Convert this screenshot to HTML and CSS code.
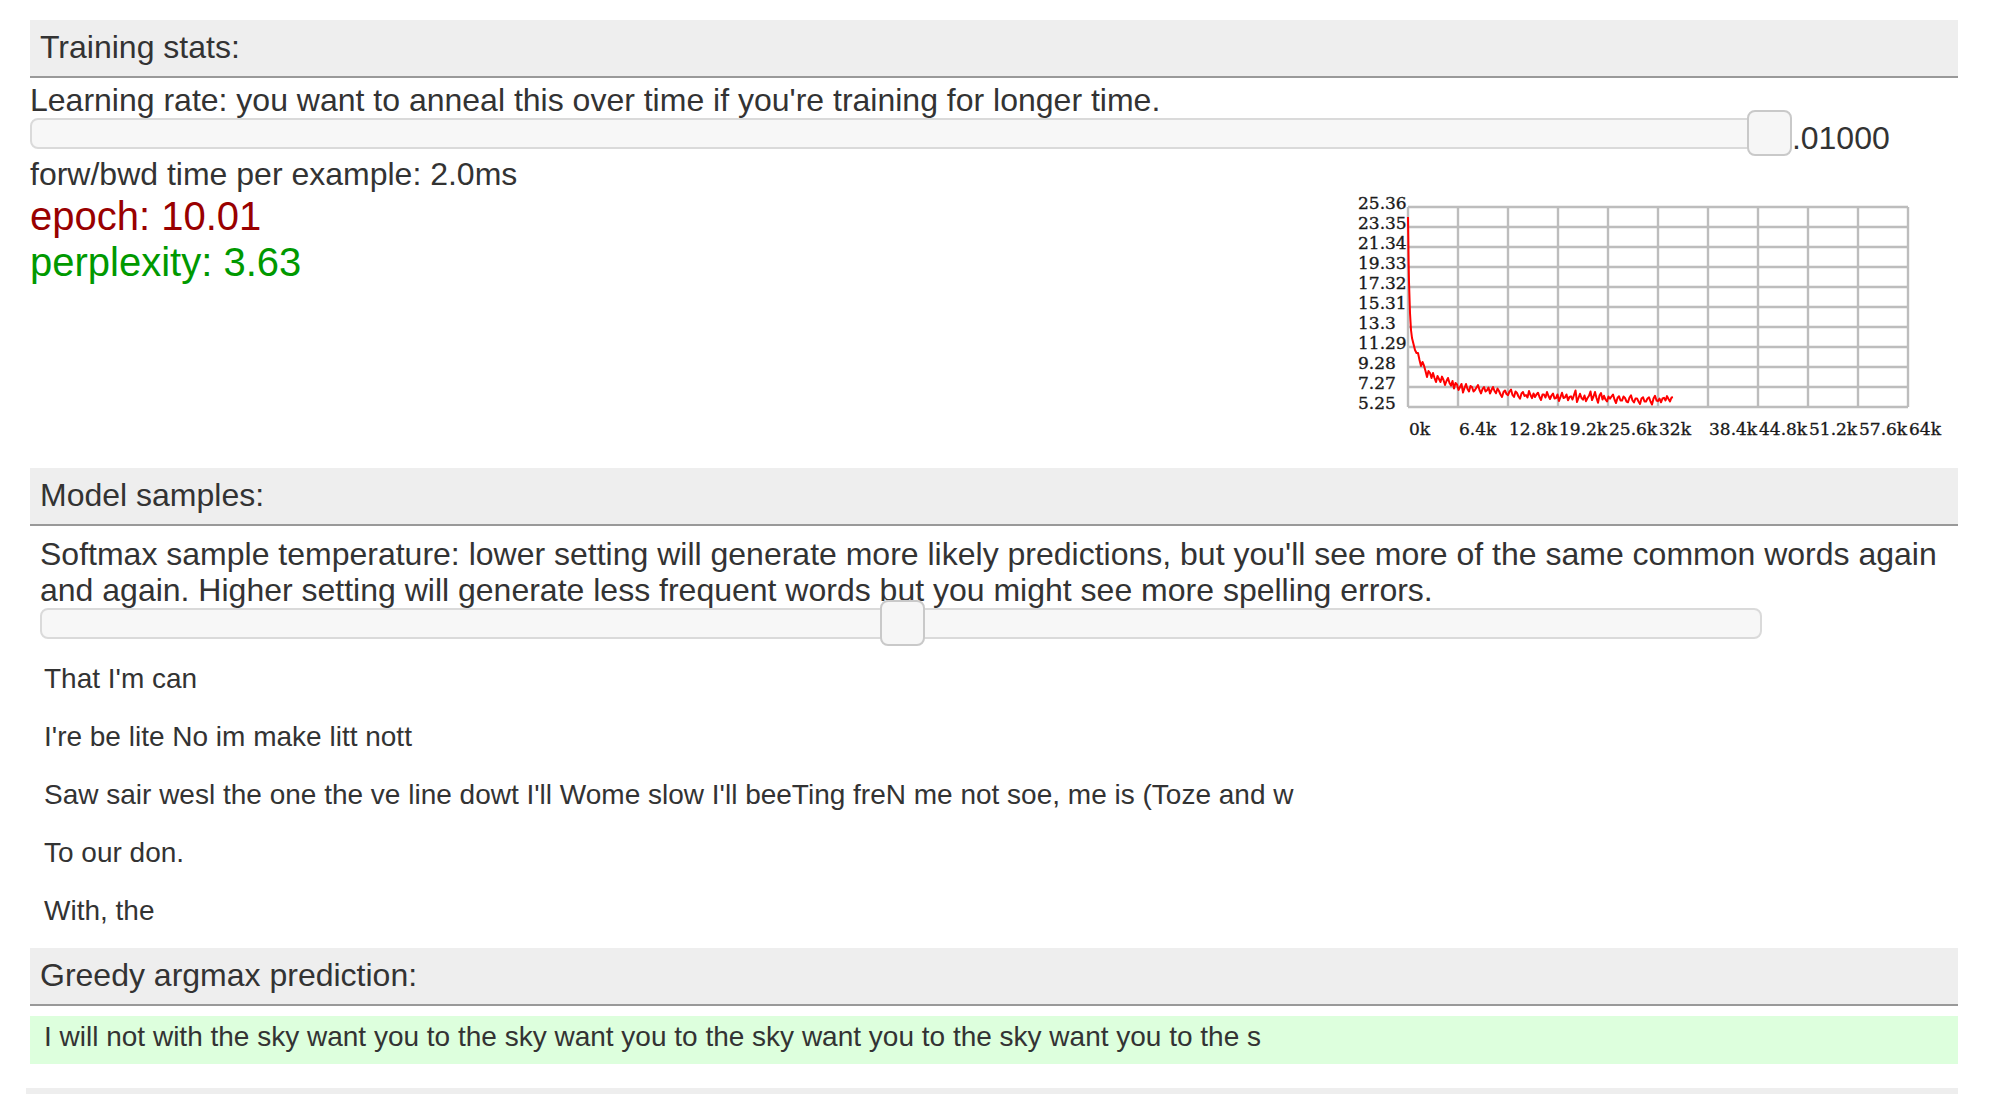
FILE: index.html
```html
<!DOCTYPE html>
<html>
<head>
<meta charset="utf-8">
<title>char-rnn demo</title>
<link rel="stylesheet" href="styles.css">
</head>
<body>
<div class="wrap">
  <div class="hh">Training stats:</div>
  <div class="line">Learning rate: you want to anneal this over time if you're training for longer time.</div>
  <div class="slider-row"><div class="track lr-track"><span class="handle lr-handle"></span></div> <span class="slider-value">0.01000</span></div>
  <div class="line">forw/bwd time per example: 2.0ms</div>
  <div class="stats-row">
    <div class="stats-col">
      <div class="epoch">epoch: 10.01</div>
      <div class="ppl">perplexity: 3.63</div>
    </div>
    <svg class="pplgraph" width="600" height="266" viewBox="0 0 600 266" xmlns="http://www.w3.org/2000/svg">
      <g class="grid">
        <path d="M50 15V215M100 15V215M150 15V215M200 15V215M250 15V215M300 15V215M350 15V215M400 15V215M450 15V215M500 15V215M550 15V215"/>
        <path d="M50 15H550M50 35H550M50 55H550M50 75H550M50 95H550M50 115H550M50 135H550M50 155H550M50 175H550M50 195H550M50 215H550"/>
      </g>
      <g class="ylab">
        <text x="0" y="17">25.36</text>
        <text x="0" y="37">23.35</text>
        <text x="0" y="57">21.34</text>
        <text x="0" y="77">19.33</text>
        <text x="0" y="97">17.32</text>
        <text x="0" y="117">15.31</text>
        <text x="0" y="137">13.3</text>
        <text x="0" y="157">11.29</text>
        <text x="0" y="177">9.28</text>
        <text x="0" y="197">7.27</text>
        <text x="0" y="217">5.25</text>
      </g>
      <g class="xlab">
        <text x="51" y="243">0k</text>
        <text x="101" y="243">6.4k</text>
        <text x="151" y="243">12.8k</text>
        <text x="201" y="243">19.2k</text>
        <text x="251" y="243">25.6k</text>
        <text x="301" y="243">32k</text>
        <text x="351" y="243">38.4k</text>
        <text x="401" y="243">44.8k</text>
        <text x="451" y="243">51.2k</text>
        <text x="501" y="243">57.6k</text>
        <text x="551" y="243">64k</text>
      </g>
      <polyline class="curve" points="50,25 50.6,70 51,90 52,121 53,138 54,146 55.5,152 57,158 58.5,161 60,161 61.5,168 63,174 64.5,170 66,173.7 67.5,179 69,185 70.5,179 72,181 73.5,186 75,181 76.5,186 78,190 79.5,184 81,187 82.5,190 84,184.6 85.5,188 87,193 88.5,189 90,186 91.5,191 93,193.6 94.5,189 96,196.6 97.5,191 99,192.5 100.5,198 102,195 103.5,192 105,200.5 106.5,196 108,192 109.5,197 111,199.5 112.5,194 114,195 115.5,199.5 117,198 118.5,195.5 120,193 121.5,198 123,201.4 124.5,197 126,195 127.5,199.5 129,198.2 130.5,195.5 132,201.5 133.5,198 135,195 136.5,199 138,201.3 139.5,196.5 141,199 142.5,202.5 144,205 145.5,200 147,198.5 148.5,202 150,203.2 151.5,199.5 153,197.5 154.5,203 156,205 157.5,199.5 159,201 160.5,204.5 162,206.6 163.5,201.5 165,200 166.5,204 168,203.1 169.5,205.5 171,199 172.5,203 174,206.2 175.5,201.5 177,205 178.5,202.5 180,200.7 181.5,205 183,208 184.5,202.5 186,202.6 187.5,205.5 189,200 190.5,204 192,207 193.5,203.5 195,201.5 196.5,206.5 198,206 199.5,202.5 201,209 202.5,205 204,200.8 205.5,206 207,205.3 208.5,202.5 210,208.3 211.5,205 213,204.3 214.5,207.5 216,203 217.5,198.5 219,210 220.5,206 222,201.8 223.5,206 225,207.7 226.5,203.5 228,209.2 229.5,206 231,203.8 232.5,199.5 234,208 235.5,204.5 237,200 238.5,206 240,210.8 241.5,203.5 243,201 244.5,207.5 246,203.8 247.5,207.5 249,209.4 250.5,204.5 252,206.6 253.5,204.5 255,202.5 256.5,207.5 258,211 259.5,206 261,204.2 262.5,208.5 264,208.6 265.5,204.5 267,205.9 268.5,209.5 270,210.3 271.5,205.5 273,203.4 274.5,208.5 276,210.5 277.5,206.5 279,206.4 280.5,209.5 282,212 283.5,206.5 285,205.2 286.5,209.5 288,209.5 289.5,206.5 291,205.4 292.5,209.5 294,212.5 295.5,206.5 297,203.8 298.5,208.5 300,209.1 301.5,206.5 303,210.3 304.5,206.5 306,205.8 307.5,208.5 309,204.1 310.5,207 312,209.4 313.5,205.5 315,205.2"/>
    </svg>
  </div>

  <div class="hh">Model samples:</div>
  <div class="controls">
    <div class="line">Softmax sample temperature: lower setting will generate more likely predictions, but you'll see more of the same common words again and again. Higher setting will generate less frequent words but you might see more spelling errors.</div>
    <div class="slider-row temp-row"><div class="track temp-track"><span class="handle temp-handle"></span></div></div>
  </div>
  <div class="apred">That I'm can</div>
  <div class="apred">I're be lite No im make litt nott</div>
  <div class="apred">Saw sair wesl the one the ve line dowt I'll Wome slow I'll beeTing freN me not soe, me is (Toze and w</div>
  <div class="apred">To our don.</div>
  <div class="apred">With, the</div>

  <div class="hh">Greedy argmax prediction:</div>
  <div class="argmax"><div class="apred">I will not with the sky want you to the sky want you to the sky want you to the sky want you to the s</div></div>

  <div class="hh next"></div>
</div>
</body>
</html>
```

FILE: styles.css
```css
* {
  box-sizing: border-box;
}

html,
body {
  margin: 0;
  padding: 0;
  background: #fff;
}

body {
  font-family: "Liberation Sans", Arial, Helvetica, sans-serif;
  color: #333;
  font-size: 32px;
  line-height: 36px;
}

.wrap {
  margin-left: 30px;
  width: 1928px;
  padding-top: 10px;
}

.hh {
  background: #eee;
  padding: 9px 10px 11px;
  margin-top: 10px;
  margin-bottom: 4px;
  border-bottom: 2px solid #999;
  height: 58px;
}

.slider-row {
  white-space: nowrap;
}

.temp-row {
  padding-bottom: 2px;
}

.track {
  display: inline-block;
  position: relative;
  height: 31px;
  border: 2px solid #dadada;
  background: #f7f7f7;
  border-radius: 8px;
  vertical-align: baseline;
}

.lr-track {
  width: 90%;
}

.temp-track {
  width: 90.25%;
}

.handle {
  position: absolute;
  top: -10px;
  width: 45px;
  height: 46px;
  border: 2px solid #c9c9c9;
  border-radius: 8px;
  background: #f6f6f6;
}

.lr-handle {
  left: calc(100% - 16px);
}

.temp-handle {
  left: calc(50% - 21px);
}

.slider-value {
  display: inline-block;
}

.stats-row {
  display: flex;
  justify-content: space-between;
  align-items: flex-start;
}

.stats-col {
  padding-top: 1px;
}

.epoch {
  color: #900;
  font-size: 40px;
  line-height: 46px;
}

.ppl {
  color: #090;
  font-size: 40px;
  line-height: 46px;
}

.pplgraph {
  display: block;
  width: 600px;
  height: 266px;
}

.grid path {
  fill: none;
  stroke: #bdbdbd;
  stroke-width: 2.4;
}

.ylab text,
.xlab text {
  font-family: "DejaVu Serif", "Liberation Serif", serif;
  font-size: 17px;
  fill: #1a1a1a;
  stroke: #1a1a1a;
  stroke-width: 0.35;
}

.curve {
  fill: none;
  stroke: #f00;
  stroke-width: 2;
  stroke-linejoin: round;
}

.controls {
  margin: 10px;
}

.apred {
  padding: 5px 4px 3px;
  margin: 10px;
  height: 48px;
  overflow: hidden;
  font-size: 28px;
  line-height: 32px;
  white-space: nowrap;
}

.argmax {
  background: #dfd;
}

.next {
  margin-top: 24px;
  margin-left: -4px;
  margin-bottom: 0;
  border-bottom: none;
  height: 20px;
  padding: 0;
}
```
